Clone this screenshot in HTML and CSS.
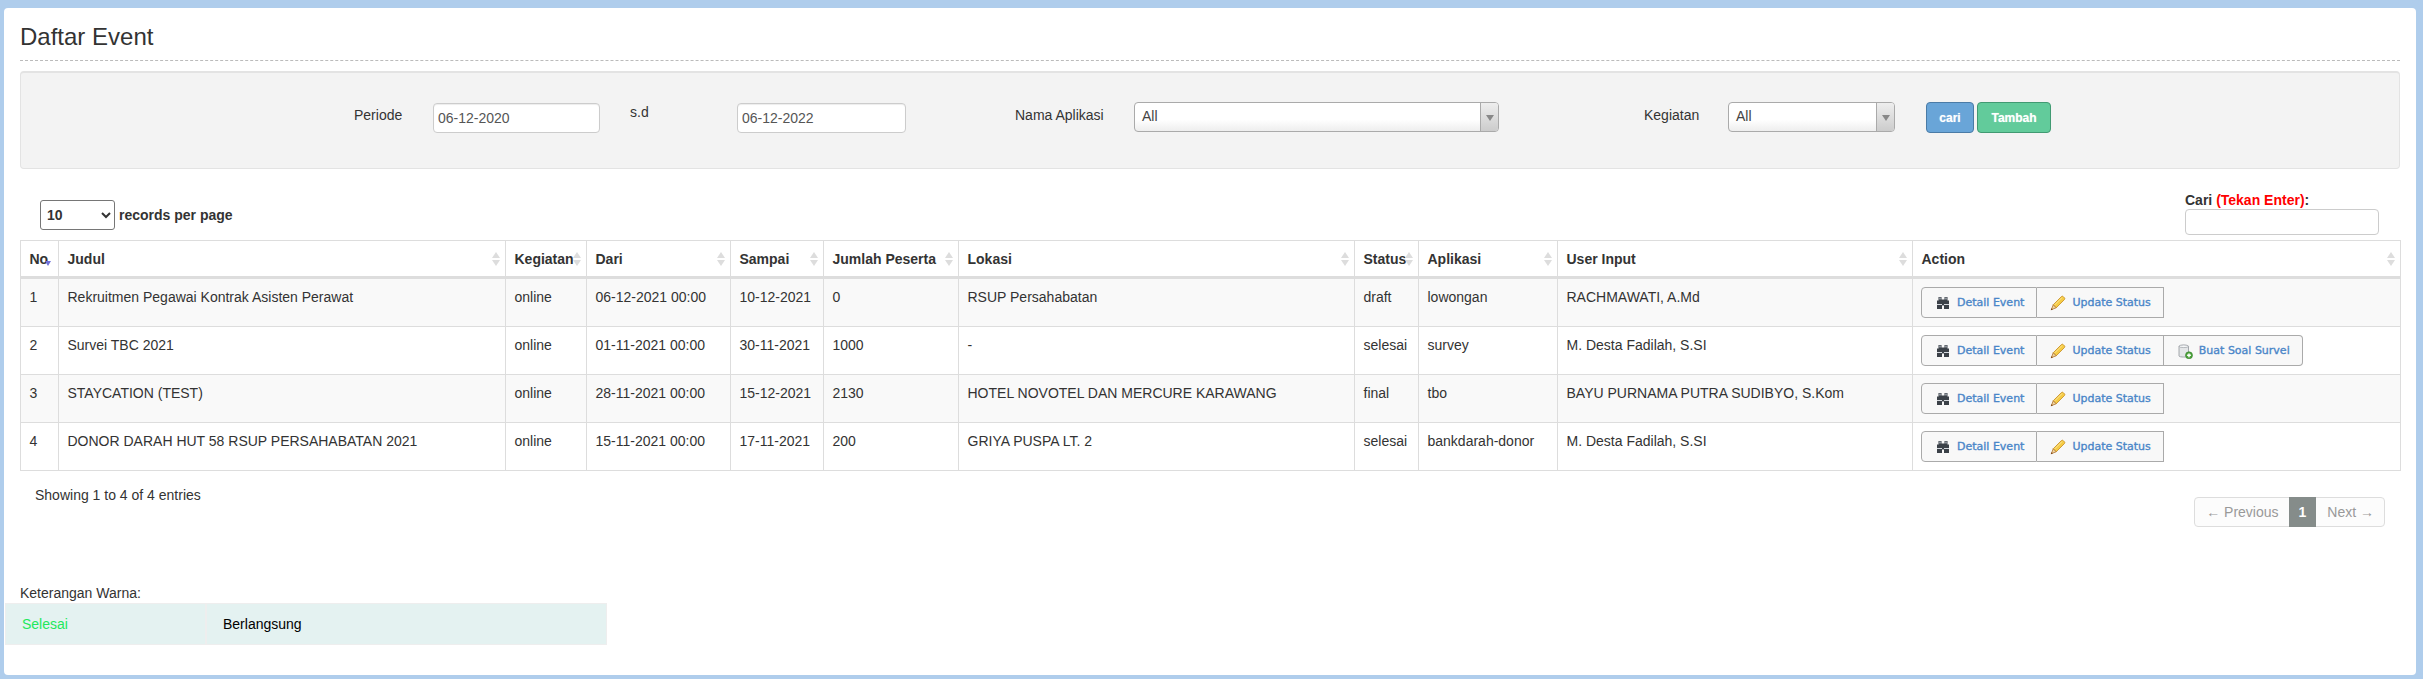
FILE: index.html
```html
<!DOCTYPE html>
<html>
  <head>
    <title>Daftar Event</title>
    <link rel="stylesheet" href="styles.css">
  </head>
  <body>
    <svg class="icon-defs" width="0" height="0">
      <symbol id="ic-binoculars" viewBox="0 0 16 16">
        <path fill="#3b4148" d="M3.500 2h3v2.500h3V2h3v3.500h1.500V14H9v-3.500H7V14H2V5.500h1.500z"/>
        <path fill="#d5d9de" d="M2 9h5v1H2zM9 9h5v1H9z"/>
        <path fill="#8b929a" d="M4 2.500h2v2H4zM10 2.500h2v2h-2z"/>
      </symbol>
      <symbol id="ic-pencil" viewBox="0 0 16 16">
        <path fill="#f6cc45" stroke="#c48a1c" stroke-width=".8" d="M3.200 9.800 11.400 1.600a1.300 1.300 0 0 1 1.800 0l1.200 1.200a1.300 1.300 0 0 1 0 1.800L6.200 12.800z"/>
        <path fill="none" stroke="#fbe59a" stroke-width="1" d="M4.800 9.800 12 2.600"/>
        <path fill="#efd6a0" stroke="#b0702a" stroke-width=".8" d="M3.200 9.800 6.200 12.800 1.400 14.600z"/>
        <path fill="#7a4518" d="M.800 15.200 1.300 13.200 2.900 14.600z"/>
      </symbol>
      <symbol id="ic-db-add" viewBox="0 0 16 16">
        <path fill="#e4e6e8" stroke="#8f949a" stroke-width=".8" d="M2 3.200C2 1.900 11.500 1.900 11.500 3.200V13c0 1.400-9.500 1.400-9.500 0z"/>
        <ellipse cx="6.750" cy="3.300" rx="4.500" ry="1.300" fill="#f6f7f8" stroke="#8f949a" stroke-width=".6"/>
        <circle cx="12" cy="12.300" r="3.500" fill="#4fa53c" stroke="#2f7a26" stroke-width=".6"/>
        <path fill="#fff" d="M11.300 10.400h1.400v1.200h1.200V13h-1.200v1.200h-1.400V13h-1.200v-1.400h1.200z"/>
      </symbol>
    </svg>

    <div class="panel">
      <h1 class="page-title">Daftar Event</h1>

      <div class="filter-well">
        <span class="filter-label label-periode">Periode</span>
        <input class="date-input date-from" value="06-12-2020">
        <span class="filter-label label-sd">s.d</span>
        <input class="date-input date-to" value="06-12-2022">
        <span class="filter-label label-aplikasi">Nama Aplikasi</span>
        <div class="combo combo-aplikasi"><span class="combo-text">All</span><span class="combo-arrow"></span></div>
        <span class="filter-label label-kegiatan">Kegiatan</span>
        <div class="combo combo-kegiatan"><span class="combo-text">All</span><span class="combo-arrow"></span></div>
        <button class="btn btn-cari">cari</button>
        <button class="btn btn-tambah">Tambah</button>
      </div>

      <div class="table-controls">
        <label class="per-page">
          <select class="per-page-select"><option>10</option></select>
          records per page
        </label>
        <div class="search-box">
          <label class="search-label">Cari <span class="search-hint">(Tekan Enter)</span>:</label>
          <input class="search-input">
        </div>
      </div>

      <table class="event-table">
        <thead>
          <tr>
            <th class="col-no sorted">No</th>
            <th class="col-judul sortable">Judul</th>
            <th class="col-kegiatan sortable">Kegiatan</th>
            <th class="col-dari sortable">Dari</th>
            <th class="col-sampai sortable">Sampai</th>
            <th class="col-jumlah sortable">Jumlah Peserta</th>
            <th class="col-lokasi sortable">Lokasi</th>
            <th class="col-status sortable">Status</th>
            <th class="col-aplikasi sortable">Aplikasi</th>
            <th class="col-user sortable">User Input</th>
            <th class="col-action sortable">Action</th>
          </tr>
        </thead>
        <tbody>
          <tr>
            <td>1</td>
            <td>Rekruitmen Pegawai Kontrak Asisten Perawat</td>
            <td>online</td>
            <td>06-12-2021 00:00</td>
            <td>10-12-2021</td>
            <td>0</td>
            <td>RSUP Persahabatan</td>
            <td>draft</td>
            <td>lowongan</td>
            <td>RACHMAWATI, A.Md</td>
            <td class="cell-action">
              <div class="btn-group">
                <a class="action-btn"><svg class="action-icon"><use href="#ic-binoculars"/></svg>Detail Event</a>
                <a class="action-btn"><svg class="action-icon"><use href="#ic-pencil"/></svg>Update Status</a>
              </div>
            </td>
          </tr>
          <tr>
            <td>2</td>
            <td>Survei TBC 2021</td>
            <td>online</td>
            <td>01-11-2021 00:00</td>
            <td>30-11-2021</td>
            <td>1000</td>
            <td>-</td>
            <td>selesai</td>
            <td>survey</td>
            <td>M. Desta Fadilah, S.SI</td>
            <td class="cell-action">
              <div class="btn-group">
                <a class="action-btn"><svg class="action-icon"><use href="#ic-binoculars"/></svg>Detail Event</a>
                <a class="action-btn"><svg class="action-icon"><use href="#ic-pencil"/></svg>Update Status</a>
                <a class="action-btn"><svg class="action-icon"><use href="#ic-db-add"/></svg>Buat Soal Survei</a>
              </div>
            </td>
          </tr>
          <tr>
            <td>3</td>
            <td>STAYCATION (TEST)</td>
            <td>online</td>
            <td>28-11-2021 00:00</td>
            <td>15-12-2021</td>
            <td>2130</td>
            <td>HOTEL NOVOTEL DAN MERCURE KARAWANG</td>
            <td>final</td>
            <td>tbo</td>
            <td>BAYU PURNAMA PUTRA SUDIBYO, S.Kom</td>
            <td class="cell-action">
              <div class="btn-group">
                <a class="action-btn"><svg class="action-icon"><use href="#ic-binoculars"/></svg>Detail Event</a>
                <a class="action-btn"><svg class="action-icon"><use href="#ic-pencil"/></svg>Update Status</a>
              </div>
            </td>
          </tr>
          <tr>
            <td>4</td>
            <td>DONOR DARAH HUT 58 RSUP PERSAHABATAN 2021</td>
            <td>online</td>
            <td>15-11-2021 00:00</td>
            <td>17-11-2021</td>
            <td>200</td>
            <td>GRIYA PUSPA LT. 2</td>
            <td>selesai</td>
            <td>bankdarah-donor</td>
            <td>M. Desta Fadilah, S.SI</td>
            <td class="cell-action">
              <div class="btn-group">
                <a class="action-btn"><svg class="action-icon"><use href="#ic-binoculars"/></svg>Detail Event</a>
                <a class="action-btn"><svg class="action-icon"><use href="#ic-pencil"/></svg>Update Status</a>
              </div>
            </td>
          </tr>
        </tbody>
      </table>

      <div class="table-footer">
        <div class="table-info">Showing 1 to 4 of 4 entries</div>
        <div class="pagination">
          <a class="page-link">&larr; Previous</a>
          <a class="page-link page-current">1</a>
          <a class="page-link">Next &rarr;</a>
        </div>
      </div>

      <div class="legend-title">Keterangan Warna:</div>
      <table class="legend-table">
        <tr>
          <td class="legend-done">Selesai</td>
          <td class="legend-running">Berlangsung</td>
        </tr>
      </table>
    </div>
  </body>
</html>
```

FILE: styles.css
```css
html, body {
  margin: 0;
  padding: 0;
}
body {
  font-family: "Liberation Sans", Arial, sans-serif;
  font-size: 14px;
  line-height: 20px;
  color: #333;
  background: #afcdec;
  padding: 8px 7px 4px 4px;
  height: 679px;
  box-sizing: border-box;
  overflow: hidden;
}
.icon-defs {
  display: block;
  height: 0;
}
.panel {
  background: #fff;
  border-radius: 4px;
  height: 667px;
  padding: 0 16px;
  box-sizing: border-box;
}
.page-title {
  margin: 0;
  height: 53px;
  padding-top: 12px;
  box-sizing: border-box;
  font-size: 24px;
  font-weight: normal;
  line-height: 34px;
  color: #333;
  border-bottom: 1px dashed #bbb;
}

/* filter bar */
.filter-well {
  display: flex;
  align-items: flex-start;
  margin-top: 10px;
  height: 98px;
  box-sizing: border-box;
  padding: 29px 0 0 333px;
  background: #f3f3f3;
  border: 1px solid #e3e3e3;
  border-top-width: 2px;
  border-radius: 4px;
}
.filter-label {
  padding-top: 3px;
}
.label-periode {
  width: 79px;
}
.label-sd {
  width: 107px;
  margin-left: 30px;
  padding-top: 0;
}
.label-aplikasi {
  width: 119px;
  margin-left: 109px;
}
.label-kegiatan {
  width: 84px;
  margin-left: 145px;
}
.date-input {
  height: 30px;
  box-sizing: border-box;
  margin-top: 1px;
  padding: 4px;
  font: 14px "Liberation Sans", Arial, sans-serif;
  color: #555;
  background: #fff;
  border: 1px solid #ccc;
  border-radius: 4px;
  box-shadow: inset 0 1px 1px rgba(0, 0, 0, .075);
}
.date-from {
  width: 167px;
}
.date-to {
  width: 169px;
}
.combo {
  display: flex;
  height: 30px;
  box-sizing: border-box;
  border: 1px solid #aaa;
  border-radius: 4px;
  background: linear-gradient(#fff 60%, #eee);
  color: #444;
}
.combo-aplikasi {
  width: 365px;
}
.combo-kegiatan {
  width: 167px;
}
.combo-text {
  flex: 1;
  padding: 3px 7px;
}
.combo-arrow {
  position: relative;
  width: 17px;
  background: linear-gradient(#eee, #ccc);
  border-left: 1px solid #aaa;
  border-radius: 0 3px 3px 0;
}
.combo-arrow::after {
  content: "";
  position: absolute;
  left: 5px;
  top: 12px;
  border: 4px solid transparent;
  border-top: 6px solid #888;
  border-bottom: 0;
}
.btn {
  height: 31px;
  box-sizing: border-box;
  padding: 0;
  font: bold 12px "Liberation Sans", Arial, sans-serif;
  color: #fff;
  border-radius: 4px;
  text-shadow: 0 0 1px rgba(255, 255, 255, .6);
}
.btn-cari {
  width: 48px;
  margin-left: 31px;
  background: #69a5d8;
  border: 1px solid #4a7ba6;
}
.btn-tambah {
  width: 74px;
  margin-left: 3px;
  background: #62cb9b;
  border: 1px solid #419a72;
}

/* length and search row */
.table-controls {
  display: flex;
  justify-content: space-between;
  height: 50px;
  margin-top: 21px;
}
.per-page {
  display: flex;
  align-items: center;
  align-self: flex-start;
  gap: 4px;
  margin: 10px 0 0 20px;
  font-weight: bold;
  font-size: 14px;
}
.per-page-select {
  width: 75px;
  height: 30px;
  padding: 0 0 0 2px;
  font: bold 14px "Liberation Sans", Arial, sans-serif;
  color: #333;
  background: #fff;
  border: 1px solid #767676;
  border-radius: 3px;
}
.search-box {
  width: 194px;
  margin-right: 21px;
}
.search-label {
  display: block;
  font-weight: bold;
  margin-bottom: -1px;
}
.search-hint {
  color: #f00;
}
.search-input {
  display: block;
  width: 100%;
  height: 26px;
  box-sizing: border-box;
  background: #fff;
  border: 1px solid #ccc;
  border-radius: 4px;
}

/* main table */
.event-table {
  width: 2380px;
  table-layout: fixed;
  border-collapse: collapse;
}
.event-table th, .event-table td {
  border: 1px solid #ddd;
  padding: 8px 8px 8px 8.5px;
  text-align: left;
  vertical-align: top;
  overflow: hidden;
  white-space: nowrap;
}
.event-table th {
  position: relative;
  height: 36px;
  padding-bottom: 7px;
  box-sizing: border-box;
  border-bottom: 3px solid #ddd;
  font-weight: bold;
}
.event-table tbody tr {
  height: 48px;
}
.event-table tbody tr:nth-child(odd) {
  background: #f9f9f9;
}
.event-table .cell-action {
  padding-left: 8px;
}
.sortable::before, .sortable::after {
  content: "";
  position: absolute;
  right: 5px;
  border: 4px solid transparent;
}
.sortable::before {
  top: 11px;
  border-bottom: 6px solid #ddd;
  border-top: 0;
}
.sortable::after {
  top: 19px;
  border-top: 6px solid #ddd;
  border-bottom: 0;
}
.sorted::after {
  content: "";
  position: absolute;
  right: 7px;
  top: 20px;
  border: 3.500px solid transparent;
  border-top: 5px solid #6f6fd8;
  border-bottom: 0;
}
.col-no { width: 38px; }
.col-judul { width: 447px; }
.col-kegiatan { width: 81px; }
.col-dari { width: 144px; }
.col-sampai { width: 93px; }
.col-jumlah { width: 135px; }
.col-lokasi { width: 396px; }
.col-status { width: 64px; }
.col-aplikasi { width: 139px; }
.col-user { width: 355px; }
.col-action { width: 488px; }
.col-no, .col-kegiatan, .col-status {
  padding-right: 0 !important;
}
.btn-group {
  display: inline-flex;
}
.action-btn {
  display: flex;
  align-items: center;
  height: 31px;
  box-sizing: border-box;
  padding: 0 12px 0 13px;
  font: 11px "DejaVu Sans", Verdana, sans-serif;
  -webkit-text-stroke: .35px #4a86c8;
  color: #4a86c8;
  background: #f8f8f8;
  border: 1px solid #aaa;
  border-left-width: 0;
}
.action-btn:first-child {
  border-left-width: 1px;
  border-radius: 4px 0 0 4px;
}
.action-btn:last-child:nth-child(3) {
  border-radius: 0 4px 4px 0;
}
.action-icon {
  width: 16px;
  height: 16px;
  margin-right: 6px;
}

/* footer */
.table-footer {
  display: flex;
  justify-content: space-between;
  height: 112px;
}
.table-info {
  margin: 14px 0 0 15px;
}
.pagination {
  display: flex;
  align-self: flex-start;
  height: 30px;
  box-sizing: border-box;
  margin: 26px 15px 0 0;
  background: #fcfcfc;
  border: 1px solid #ddd;
  border-radius: 4px;
}
.page-link {
  padding: 4px 10px 4px 11px;
  line-height: 20px;
  color: #999;
}
.page-current {
  margin: -1px 0;
  padding: 5px 10px;
  font-weight: bold;
  color: #fff;
  background: #858c8a;
}
.legend-title {
  height: 20px;
}
.legend-table {
  width: 602px;
  height: 42px;
  margin-left: -15px;
  border-collapse: collapse;
  background: #e4f2f1;
}
.legend-table td {
  border: 1px solid #eee;
  padding: 8px 16px;
}
.legend-done {
  width: 167px;
  border-right: 2px solid #eee !important;
  color: #22e85c;
}
.legend-running {
  color: #000;
}
```
